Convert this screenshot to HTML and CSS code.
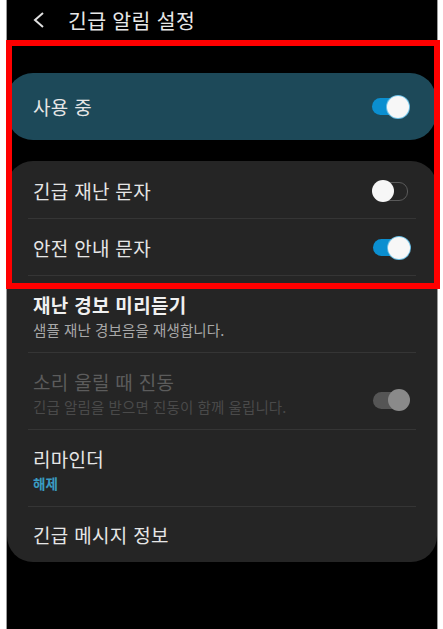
FILE: index.html
```html
<!DOCTYPE html>
<html lang="ko">
<head>
<meta charset="utf-8">
<link rel="stylesheet" href="styles.css">
</head>
<body>
<div class="phone">
  <header class="header">
    <svg class="back" width="12" height="16" viewBox="0 0 12 16"><polyline points="10,1 2,8 10,15" fill="none" stroke="#e0e0e0" stroke-width="2"/></svg>
    <h1 class="title">긴급 알림 설정</h1>
  </header>

  <section class="master">
    <span class="label">사용 중</span>
    <span class="toggle on"></span>
  </section>

  <section class="card">
    <div class="row single">
      <span class="label">긴급 재난 문자</span>
      <span class="toggle off"></span>
    </div>
    <div class="row single">
      <span class="label">안전 안내 문자</span>
      <span class="toggle on"></span>
    </div>
    <div class="row double">
      <div class="texts">
        <span class="label strong">재난 경보 미리듣기</span>
        <span class="sub">샘플 재난 경보음을 재생합니다.</span>
      </div>
    </div>
    <div class="row double disabled">
      <div class="texts">
        <span class="label">소리 울릴 때 진동</span>
        <span class="sub">긴급 알림을 받으면 진동이 함께 울립니다.</span>
      </div>
      <span class="toggle dis"></span>
    </div>
    <div class="row double">
      <div class="texts">
        <span class="label">리마인더</span>
        <span class="sub accent">해제</span>
      </div>
    </div>
    <div class="row single last">
      <span class="label">긴급 메시지 정보</span>
    </div>
  </section>

  <div class="highlight"></div>
</div>
</body>
</html>
```

FILE: styles.css
```css
* { box-sizing: border-box; margin: 0; padding: 0; }
html, body { background: #ffffff; }
body {
  margin: 0;
  font-family: "Noto Sans CJK KR", "Noto Sans", sans-serif;
  color: #e6e6e6;
}
.phone {
  position: relative;
  margin-left: 6px;
  width: 432px;
  height: 629px;
  background: #000;
  border-left: 1px solid #9a9a9a;
  border-right: 1px solid #9a9a9a;
}
.header {
  height: 40px;
  display: flex;
  align-items: center;
  padding-left: 26px;
}
.back { display: block; margin-right: 23px; }
.title {
  font-size: 20.5px;
  font-weight: 400;
  color: #e8e8e8;
  line-height: 24px;
  letter-spacing: 0.3px;
}
.master {
  margin-top: 33px;
  height: 67px;
  background: #1d4959;
  border-radius: 26px;
  display: flex;
  align-items: center;
  justify-content: space-between;
  padding: 0 27px 0 26px;
  margin-right: 1px;
}
.label {
  font-size: 19px;
  line-height: 22px;
  color: #e6e6e6;
  letter-spacing: 0.3px;
}
.label.strong { font-weight: 700; color: #f0f0f0; }
.card {
  margin-top: 21px;
  background: #252525;
  border-radius: 26px;
  padding: 1px 0 0;
}
.row {
  position: relative;
  display: flex;
  align-items: center;
  justify-content: space-between;
  padding: 0 27px 0 26px;
}
.row::after {
  content: "";
  position: absolute;
  left: 21px;
  right: 21px;
  bottom: 0;
  height: 1px;
  background: #353535;
}
.row.last::after { display: none; }
.row.single { height: 57px; }
.row.last { height: 55px; }
.row.double {
  height: 77px;
  align-items: flex-start;
  padding-top: 18px;
}
.row.double .toggle { margin-top: 18px; }
.texts { display: flex; flex-direction: column; }
.texts .label { margin-bottom: 4px; }
.sub {
  font-size: 14.5px;
  line-height: 20px;
  color: #a8a8a8;
  letter-spacing: 0.1px;
}
.sub.accent {
  font-size: 13.5px;
  line-height: 18px;
  font-weight: 700;
  color: #3a9cc2;
}
.disabled .label { color: #5c5c5c; }
.disabled .sub { color: #4a4a4a; }

.toggle {
  position: relative;
  display: block;
  width: 38px;
  height: 22px;
  flex: none;
}
.toggle::before {
  content: "";
  position: absolute;
  left: 1px;
  right: 2px;
  top: 2.5px;
  height: 17px;
  border-radius: 9px;
}
.toggle::after {
  content: "";
  position: absolute;
  top: 0;
  width: 22px;
  height: 22px;
  border-radius: 50%;
  background: #f7f7f7;
}
.toggle.on::before { background: #0b8fd0; }
.toggle.on::after { right: 0; box-shadow: 0 0 0 1px #6cc0e6; }
.toggle.off::before { border: 1.5px solid #5a5a5a; background: transparent; }
.toggle.off::after { left: 0; }
.toggle.dis::before { background: #555; }
.toggle.dis::after { right: 0; background: #8a8a8a; }

.highlight {
  position: absolute;
  left: -1px;
  top: 40px;
  width: 434px;
  height: 249px;
  border: 6px solid #ff0000;
  pointer-events: none;
}
```
